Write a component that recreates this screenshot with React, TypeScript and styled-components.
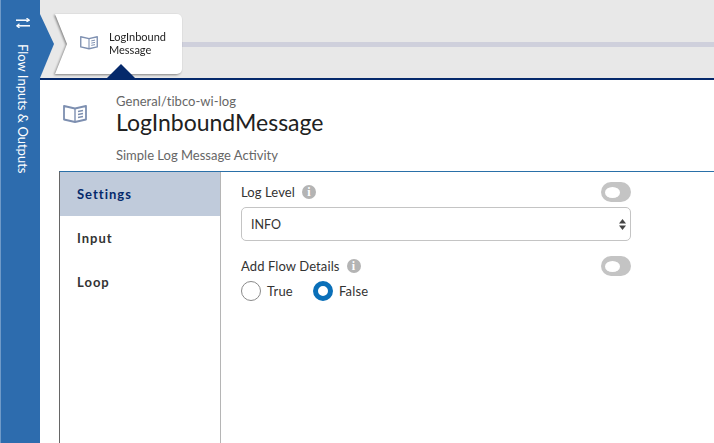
import React from 'react';
import styled, { createGlobalStyle } from 'styled-components';

const GlobalStyle = createGlobalStyle`
  html, body {
    margin: 0;
    padding: 0;
    height: 100%;
    overflow: hidden;
    background: #ffffff;
    font-family: "Lato", "Noto Sans", sans-serif;
  }
  * {
    box-sizing: border-box;
  }
`;

const Page = styled.div`
  display: flex;
  width: 714px;
  height: 443px;
  overflow: hidden;
`;

const Sidebar = styled.aside`
  position: relative;
  z-index: 2;
  flex: none;
  width: 40px;
  display: flex;
  flex-direction: column;
  align-items: center;
  gap: 16px;
  padding-top: 18px;
  padding-left: 4px;
  background: #2d6cae;
  border-left: 1px solid #6f9ac8;
  color: #ffffff;

  &::after {
    content: '';
    position: absolute;
    top: 14px;
    left: 39px;
    width: 14px;
    height: 64px;
    background: #2d6cae;
    clip-path: polygon(0 0, 100% 47%, 0 100%);
  }
`;

const SidebarLabel = styled.span`
  writing-mode: vertical-rl;
  font-size: 13px;
  white-space: nowrap;
`;

const Main = styled.main`
  flex: 1;
  min-width: 0;
  display: flex;
  flex-direction: column;
`;

const TopBar = styled.div`
  position: relative;
  flex: none;
  height: 80px;
  display: flex;
  padding: 14px 0 0 15px;
  background: #e8e8e8;
  border-bottom: 2px solid #05296b;
`;

const Track = styled.div`
  position: absolute;
  top: 42px;
  left: 142px;
  right: 0;
  height: 5px;
  background: #cfd0dc;
`;

const TabShadow = styled.div`
  position: relative;
  z-index: 1;
  width: 127px;
  height: 60px;
  filter: drop-shadow(-1px 1px 1px rgba(0, 0, 0, 0.45));
`;

const Tab = styled.div`
  width: 100%;
  height: 100%;
  display: flex;
  align-items: center;
  gap: 11px;
  padding: 0 0 2px 25px;
  background: #ffffff;
  border-radius: 0 5px 5px 0;
  clip-path: polygon(0 0, 100% 0, 100% 100%, 0 100%, 12px 50%);
`;

const TabLabel = styled.span`
  font-size: 11px;
  line-height: 13px;
  color: #222222;
`;

const TabPointer = styled.div`
  position: absolute;
  z-index: 2;
  left: 67px;
  bottom: 0;
  width: 28px;
  height: 14px;
  background: #05296b;
  clip-path: polygon(50% 0, 100% 100%, 0 100%);
`;

const Body = styled.div`
  flex: 1;
  min-height: 0;
  display: flex;
  flex-direction: column;
  padding-left: 19px;
`;

const Header = styled.header`
  flex: none;
  height: 91px;
  display: flex;
  gap: 29px;
  padding: 14px 0 0 4px;
`;

const HeaderIcon = styled.div`
  padding-top: 11px;
  line-height: 0;
`;

const Category = styled.div`
  font-size: 13px;
  line-height: 14px;
  letter-spacing: 0.05px;
  color: #666666;
`;

const Title = styled.h1`
  margin: 0;
  font-size: 23px;
  font-weight: 400;
  line-height: 29px;
  color: #212121;
`;

const Description = styled.div`
  margin-top: 10px;
  font-size: 13px;
  line-height: 16px;
  color: #666666;
`;

const Panel = styled.section`
  flex: 1;
  min-height: 0;
  display: flex;
  border-top: 1px solid #2a70a8;
  border-left: 1px solid #666666;
`;

const Menu = styled.nav`
  flex: none;
  width: 161px;
  border-right: 1px solid #b5b5b5;
`;

const MenuItem = styled.div<{ $active?: boolean }>`
  height: 44px;
  display: flex;
  align-items: center;
  padding-left: 17px;
  font-size: 13px;
  font-weight: 700;
  letter-spacing: 1px;
  color: ${(p) => (p.$active ? '#05296b' : '#333333')};
  background: ${(p) => (p.$active ? '#c0cbdb' : 'transparent')};
`;

const Form = styled.div`
  width: 410px;
  display: flex;
  flex-direction: column;
  padding: 10px 0 0 20px;
`;

const FieldHead = styled.div`
  height: 20px;
  display: flex;
  align-items: center;
  justify-content: space-between;
`;

const FieldLabel = styled.div`
  display: flex;
  align-items: center;
  gap: 7px;
  font-size: 13px;
  letter-spacing: 0.1px;
  color: #333333;
`;

const InfoDot = styled.span`
  width: 14px;
  height: 14px;
  display: flex;
  align-items: center;
  justify-content: center;
  border-radius: 50%;
  background: #b4b4b4;
  color: #ffffff;
  font-family: "Liberation Serif", serif;
  font-size: 12px;
  font-weight: 700;
`;

const Toggle = styled.span`
  position: relative;
  width: 30px;
  height: 20px;
  border-radius: 10px;
  background: #c4c4c4;

  &::after {
    content: '';
    position: absolute;
    top: 4.5px;
    left: 4px;
    width: 15px;
    height: 11px;
    border-radius: 50%;
    background: #ffffff;
  }
`;

const SelectBox = styled.div`
  height: 34px;
  margin: 5px 0 15px;
  display: flex;
  align-items: center;
  justify-content: space-between;
  padding: 0 4px 0 9px;
  border: 1px solid #c4c4c4;
  border-radius: 5px;
  font-size: 12.5px;
  color: #333333;
`;

const RadioRow = styled.div`
  display: flex;
  align-items: center;
  gap: 20px;
  margin-top: 5px;
`;

const RadioOption = styled.label`
  display: flex;
  align-items: center;
  gap: 6px;
  font-size: 13px;
  letter-spacing: 0.2px;
  color: #333333;
`;

const RadioMark = styled.span<{ $checked?: boolean }>`
  width: 20px;
  height: 20px;
  border-radius: 50%;
  background: #ffffff;
  border: ${(p) => (p.$checked ? '5px solid #0a6fb8' : '1px solid #8a8a8a')};
`;

const SwapIcon = () => (
  <svg width="14" height="10" viewBox="0 0 14 10" fill="none" stroke="#ffffff" strokeWidth="1.5">
    <path d="M0 2.2H13" />
    <path d="M10.5 0L13.2 2.2L10.5 3.8" strokeWidth="1.2" />
    <path d="M14 7.8H1" />
    <path d="M3.5 5.8L.8 7.8L3.5 10" strokeWidth="1.2" />
  </svg>
);

const BookIcon = ({ size }: { size: number }) => (
  <svg width={size} height={size * 0.75} viewBox="0 0 24 18" fill="none" stroke="#7d8fb0" strokeWidth="1.8">
    <path d="M12 3.5L1 1V14.5L12 17L23 14.5V1L12 3.5Z" strokeLinejoin="round" />
    <path d="M12 3.5V17" strokeWidth="1.4" />
    <path d="M15 6.5L20 5.5M15 9.5L20 8.5M15 12.5L20 11.5" strokeWidth="1.3" />
  </svg>
);

const SortArrows = () => (
  <svg width="7" height="11" viewBox="0 0 7 11" fill="#444444">
    <path d="M3.5 0L7 4.5H0Z" />
    <path d="M0 6.5H7L3.5 11Z" />
  </svg>
);

const App: React.FC = () => {
  return (
    <>
      <GlobalStyle />
      <Page>
        <Sidebar>
          <SwapIcon />
          <SidebarLabel>Flow Inputs &amp; Outputs</SidebarLabel>
        </Sidebar>
        <Main>
          <TopBar>
            <Track />
            <TabShadow>
              <Tab>
                <BookIcon size={18} />
                <TabLabel>
                  LogInbound
                  <br />
                  Message
                </TabLabel>
              </Tab>
            </TabShadow>
            <TabPointer />
          </TopBar>
          <Body>
            <Header>
              <HeaderIcon>
                <BookIcon size={24} />
              </HeaderIcon>
              <div>
                <Category>General/tibco-wi-log</Category>
                <Title>LogInboundMessage</Title>
                <Description>Simple Log Message Activity</Description>
              </div>
            </Header>
            <Panel>
              <Menu>
                <MenuItem $active>Settings</MenuItem>
                <MenuItem>Input</MenuItem>
                <MenuItem>Loop</MenuItem>
              </Menu>
              <Form>
                <FieldHead>
                  <FieldLabel>
                    Log Level <InfoDot>i</InfoDot>
                  </FieldLabel>
                  <Toggle />
                </FieldHead>
                <SelectBox>
                  INFO
                  <SortArrows />
                </SelectBox>
                <FieldHead>
                  <FieldLabel>
                    Add Flow Details <InfoDot>i</InfoDot>
                  </FieldLabel>
                  <Toggle />
                </FieldHead>
                <RadioRow>
                  <RadioOption>
                    <RadioMark />
                    True
                  </RadioOption>
                  <RadioOption>
                    <RadioMark $checked />
                    False
                  </RadioOption>
                </RadioRow>
              </Form>
            </Panel>
          </Body>
        </Main>
      </Page>
    </>
  );
};

export default App;
